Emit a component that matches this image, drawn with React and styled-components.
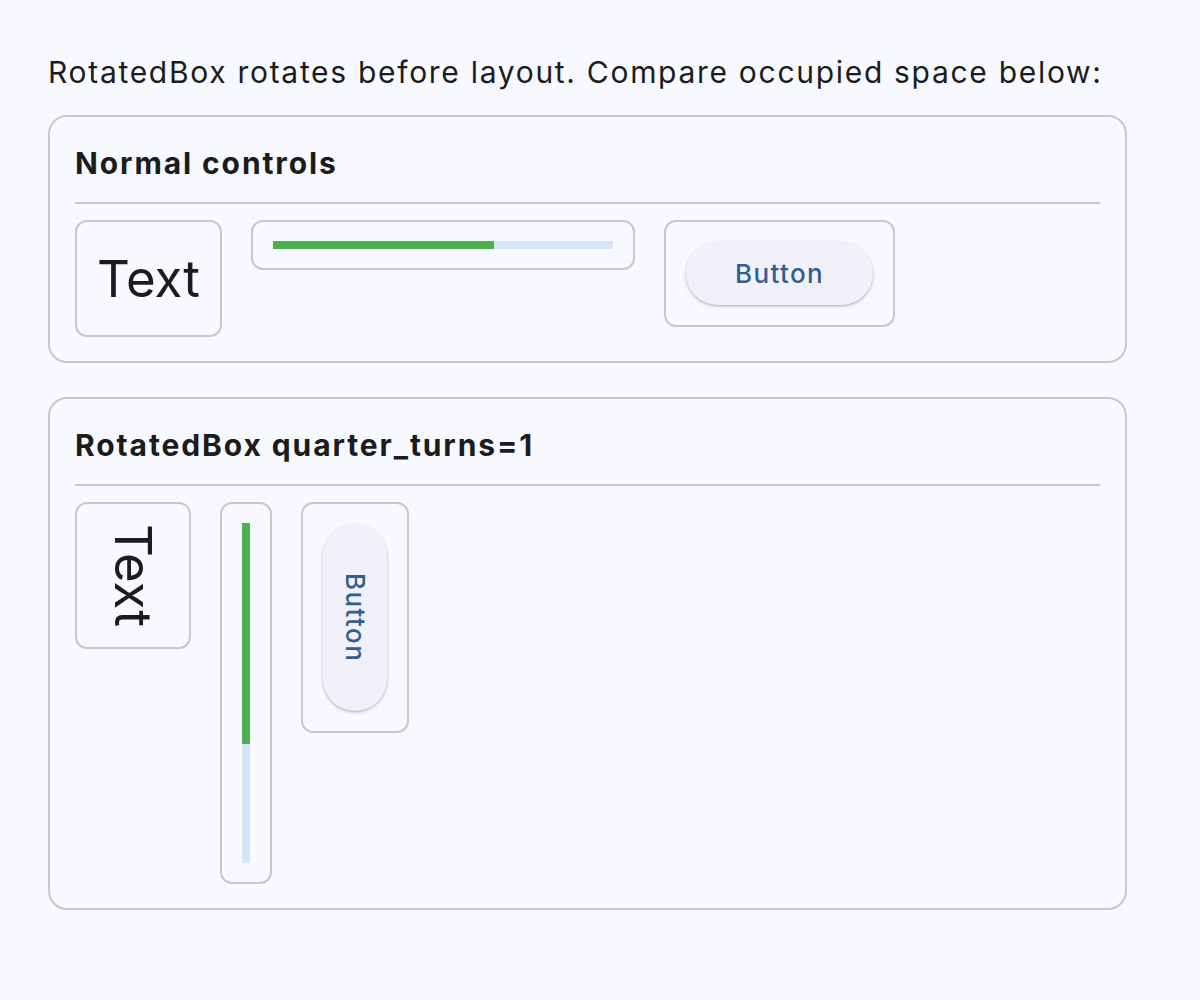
import React from 'react';
import styled, { createGlobalStyle } from 'styled-components';

const GlobalStyle = createGlobalStyle`
  body {
    margin: 0;
    background: #f8f9ff;
    font-family: Inter, 'Noto Sans', sans-serif;
    color: #1a1c20;
  }
`;

const Page = styled.div`
  padding: 54px 0 60px 48px;
  width: 1079px;
`;

const Intro = styled.p`
  margin: 0 0 25px;
  font-size: 30px;
  line-height: 36px;
  letter-spacing: 1.7px;
  white-space: nowrap;
`;

const Card = styled.section`
  border: 2px solid #c6c8cf;
  border-radius: 19px;
  padding: 28px 25px 24px;
  & + & {
    margin-top: 34px;
  }
`;

const Title = styled.h2`
  margin: 0;
  font-size: 30px;
  line-height: 36px;
  font-weight: 700;
  letter-spacing: 1.9px;
`;

const Divider = styled.hr`
  margin: 21px 0 16px;
  border: none;
  height: 2px;
  background: #c6c8cf;
`;

const Row = styled.div`
  display: flex;
  align-items: flex-start;
  gap: 29px;
`;

const Frame = styled.div`
  border: 2px solid #c6c8cf;
  border-radius: 12px;
  padding: ${(p) => p.$pad || '20px'};
  display: flex;
`;

const BigText = styled.span`
  font-size: 51px;
  line-height: ${(p) => (p.$rotated ? '72px' : '73px')};
  writing-mode: ${(p) => (p.$rotated ? 'vertical-rl' : 'horizontal-tb')};
`;

const Track = styled.div`
  display: flex;
  flex-direction: ${(p) => (p.$rotated ? 'column' : 'row')};
  width: ${(p) => (p.$rotated ? '8px' : '340px')};
  height: ${(p) => (p.$rotated ? '340px' : '8px')};
  background: #d8e3f6;
`;

const Fill = styled.div`
  flex: 0 0 65%;
  background: #4caf50;
`;

const PillButton = styled.button`
  writing-mode: ${(p) => (p.$rotated ? 'vertical-rl' : 'horizontal-tb')};
  width: ${(p) => (p.$rotated ? '64px' : '187px')};
  height: ${(p) => (p.$rotated ? '187px' : '63px')};
  padding: 0;
  border: none;
  border-radius: 32px;
  background: #f1f2f9;
  box-shadow: 0 1px 2px rgba(0, 0, 0, 0.22), 0 2px 5px rgba(0, 0, 0, 0.1);
  font-family: Inter, sans-serif;
  font-size: 26px;
  font-weight: 500;
  letter-spacing: 1.4px;
  color: #335f8e;
  cursor: pointer;
`;

function Controls({ rotated }) {
  return (
    <Row>
      <Frame>
        <BigText $rotated={rotated}>Text</BigText>
      </Frame>
      <Frame $pad={rotated ? '19px 20px' : '19px 20px'}>
        <Track $rotated={rotated}>
          <Fill />
        </Track>
      </Frame>
      <Frame>
        <PillButton $rotated={rotated}>Button</PillButton>
      </Frame>
    </Row>
  );
}

export default function App() {
  return (
    <>
      <GlobalStyle />
      <Page>
        <Intro>RotatedBox rotates before layout. Compare occupied space below:</Intro>
        <Card>
          <Title>Normal controls</Title>
          <Divider />
          <Controls />
        </Card>
        <Card>
          <Title>RotatedBox quarter_turns=1</Title>
          <Divider />
          <Controls rotated />
        </Card>
      </Page>
    </>
  );
}
